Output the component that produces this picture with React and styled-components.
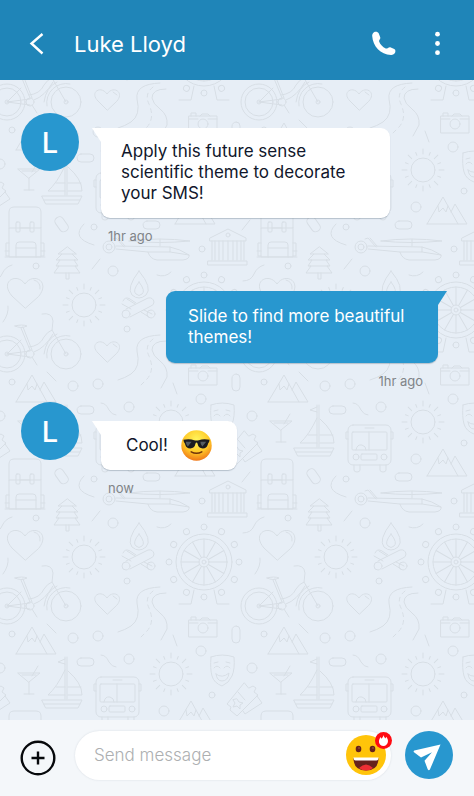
import React from "react";
import styled, { createGlobalStyle } from "styled-components";

const GlobalStyle = createGlobalStyle`
  * { box-sizing: border-box; }
  body { margin: 0; font-family: Inter, "Liberation Sans", sans-serif; }
  button { font: inherit; border: 0; padding: 0; background: none; color: inherit; cursor: pointer; }
`;

const Screen = styled.div`
  display: flex;
  flex-direction: column;
  min-height: 100vh;
  background: #e7eef6;
`;

const Header = styled.header`
  display: flex;
  align-items: center;
  gap: 20px;
  min-height: 80px;
  padding: 8px 24px 0;
  background: #1f85b8;
  color: #fff;
`;

const Actions = styled.div`
  display: flex;
  gap: 24px;
`;

const IconButton = styled.button`
  display: flex;
  align-items: center;
  justify-content: center;
  flex: none;
  width: ${(p) => p.$size || 28}px;
  height: ${(p) => p.$size || 28}px;
`;

const Title = styled.h1`
  flex: 1;
  margin: 0;
  font-size: 22px;
  line-height: 30px;
  font-weight: 400;
`;

const Chat = styled.main`
  position: relative;
  flex: 1;
  overflow: hidden;
`;

const Wallpaper = styled.svg`
  position: absolute;
  inset: 0;
  width: 100%;
  height: 100%;
`;

const Doodles = styled.g`
  fill: none;
  stroke: #d7dee5;
  stroke-width: 1;
  stroke-linecap: round;
  stroke-linejoin: round;
`;

const Messages = styled.ol`
  position: relative;
  display: flex;
  flex-direction: column;
  gap: 11px;
  margin: 0;
  padding: 33px 36px 33px 21px;
  list-style: none;
`;

const Message = styled.li`
  display: flex;
  align-items: flex-start;
  gap: 22px;
  padding-top: ${(p) => (p.$own ? 34 : 0)}px;
  justify-content: ${(p) => (p.$own ? "flex-end" : "flex-start")};
`;

const Avatar = styled.div`
  display: flex;
  align-items: center;
  justify-content: center;
  flex: none;
  width: 58px;
  height: 58px;
  border-radius: 50%;
  background: #2897cf;
  color: #fff;
  font-size: 29px;
  font-weight: 500;
`;

const Stack = styled.div`
  display: flex;
  flex-direction: column;
  gap: 8px;
  padding-top: ${(p) => (p.$own ? 0 : p.$top)}px;
  align-items: ${(p) => (p.$own ? "flex-end" : "flex-start")};
`;

const Bubble = styled.div`
  position: relative;
  display: flex;
  align-items: center;
  gap: 13px;
  max-width: ${(p) => (p.$own ? 272 : 289)}px;
  padding: ${(p) => (p.$compact ? "9px 25px" : p.$own ? "15px 22px" : "13px 20px 14px")};
  border-radius: ${(p) => (p.$own ? "9px 0 9px 9px" : "0 9px 9px 9px")};
  background: ${(p) => (p.$own ? "#2897cf" : "#fff")};
  color: ${(p) => (p.$own ? "#fff" : "#10162b")};
  font-size: 17px;
  line-height: 21px;
  box-shadow: 0 1px 1px rgba(70, 90, 110, 0.3);

  &::before {
    content: "";
    position: absolute;
    top: 0;
    ${(p) => (p.$own ? "right: -9px" : "left: -9px")};
    width: 10px;
    height: 14px;
    background: inherit;
    clip-path: ${(p) => (p.$own ? "polygon(0 0, 100% 0, 10% 100%, 0 100%)" : "polygon(0 0, 100% 0, 100% 100%, 90% 100%)")};
  }
`;

const Time = styled.time`
  padding: ${(p) => (p.$own ? "0 15px" : "0 7px")};
  color: #808488;
  font-size: 13px;
  line-height: 20px;
`;

const Composer = styled.form`
  display: flex;
  align-items: center;
  gap: 14px;
  min-height: 76px;
  padding: 0 21px 6px 19px;
  background: #f4f7fa;
`;

const Field = styled.div`
  display: flex;
  align-items: center;
  flex: 1;
  min-width: 0;
  height: 49px;
  margin-left: 4px;
  padding: 0 5px 0 19px;
  border-radius: 25px;
  background: #fff;
  box-shadow: 0 0 2px rgba(70, 90, 110, 0.18);
`;

const TextInput = styled.input`
  flex: 1;
  min-width: 0;
  border: 0;
  padding: 0;
  outline: 0;
  background: none;
  color: #10162b;
  font: 400 17px/24px Inter, "Liberation Sans", sans-serif;
  &::placeholder { color: #adafb1; font-weight: 300; opacity: 1; }
`;

const EmojiButton = styled(IconButton)`
  position: relative;
`;

const Badge = styled.span`
  position: absolute;
  top: -3px;
  right: -6px;
  width: 17px;
  height: 17px;
  display: flex;
  align-items: center;
  justify-content: center;
  border-radius: 50%;
  background: #ff0b12;
`;

const SendButton = styled.button`
  display: flex;
  align-items: center;
  justify-content: center;
  flex: none;
  width: 48px;
  height: 48px;
  border-radius: 50%;
  background: #2897cf;
`;

const Sun = ({ x, y }) => (
  <g transform={`translate(${x} ${y})`}>
    <circle r="12" />
    {Array.from({ length: 16 }, (_, i) => (
      <path key={i} d={i % 2 ? "M0-16v-3" : "M0-16v-5"} transform={`rotate(${i * 22.5})`} />
    ))}
  </g>
);

const Mountains = ({ x, y }) => (
  <path
    transform={`translate(${x} ${y})`}
    d="M0 27 16 0 31 27M24 15l4-8 12 20H0M11 9l1 6 4-4 3 4 2-6"
  />
);

const Scene = () => (
  <Doodles id="scene">
    {/* backpack */}
    <path d="M9 12V-4q0-5 5-5h22q5 0 5 5v16H9v29h32V12M20 12h10" />
    <rect x="16" y="6" width="4" height="10" rx="1" /><rect x="30" y="6" width="4" height="10" rx="1" />
    <path d="M9 27H6v13h3M41 27h3v13h-3M16 41V29q0-3 3-3h14q3 0 3 3v12M16 32h20M5 35h4M41 35h4M5 41h40" />
    <rect x="-8" y="-4" width="16" height="9" rx="4" transform="translate(62 8) rotate(55)" />
    <path d="M84 8q-14 14 10 21" /><circle cx="94" cy="11" r="3" />
    {/* helicopter */}
    <circle cx="109" cy="31" r="6" /><circle cx="109" cy="31" r="3" />
    <path d="M113 23l3-1 8 9M118 22l7 8M116 30l54 1q10 2 19 8 1 4-6 5h-26q-7-1-9-8l-32-3M148 36h22v-5M129 25q30-4 61 0-31 3-61 0ZM160 23v7M170 36l19 3" />
    <rect x="143" y="5" width="17" height="8" rx="4" />
    {/* museum */}
    <path d="M210 22 228 13l18 9v3h-36zM212 25v19M215 25v19M219 25v19M223 25v19M228 25v19M233 25v19M237 25v19M241 25v19M244 25v19M208 45h39v4h-39z" />
    <circle cx="228" cy="19" r="2" /><circle cx="202" cy="33" r="3" />
    {/* tree */}
    <path d="M67 31 58 38h4l-6 6h4l-4 6h3l-5 7h26l-5-7h3l-4-6h4l-6-6h4zM62 38h10M59 44h16M58 50h18M66 57v6h3v-6" />
    <path d="M100 43 92 53M-9 65q8 0 11-7t10-9M157 59q8 3 14-3M8 90q1 8-5 16M250 4l-8 10" />
    <circle cx="113" cy="55" r="5" /><circle cx="36" cy="50" r="3" />
    {/* hearts */}
    <path d="M25 92 12 80C-1 65 17 56 25 68 33 56 51 65 39 80zM34 64q7 2 6 9" />
    <path d="M107 146 98 137C89 128 101 121 107 130 113 121 125 128 117 137zM113 128l4 3" />
    <Sun x={84} y={89} /><Sun x={171} y={206} />
    {/* campfire */}
    <path d="M139 55q14 17 7 24-7 6-14 0-6-7 7-24ZM139 66q7 9 3 12-3 3-6 0-4-3 3-12Z" />
    <path d="M126 93l22-11q5-1 6 4 0 3-3 4l-21 11M127 83l8 5M123 85q2-5 7-2l6 4M122 88l9 5M141 96l8 5M144 94l8 4" />
    <circle cx="126" cy="98" r="4" /><circle cx="151" cy="98" r="4" /><circle cx="127" cy="113" r="3" />
    {/* ferris wheel */}
    <g transform="translate(204 94)">
      <circle r="28" /><circle r="23" /><circle r="5" /><circle r="2" />
      {Array.from({ length: 12 }, (_, i) => (
        <g key={i} transform={`rotate(${i * 30})`}><path d="M0-5v-18" /><circle cy="-35" r="3" /></g>
      ))}
      <path d="M-10 28l-3 14h-12M10 28l3 14h12" />
    </g>
    {/* bicycle */}
    <circle cx="7" cy="138" r="14" /><circle cx="7" cy="138" r="18" /><circle cx="7" cy="138" r="2" />
    <circle cx="66" cy="138" r="15" /><path d="M47 142a19 19 0 0 1 23-22M44 138q2-15 13-20" />
    <circle cx="66" cy="138" r="2" /><circle cx="30" cy="138" r="4" />
    <path d="M15 110q6 3 12 0-5-2-12 0ZM21 112l9 22M23 111l9 23M7 138l23-3M7 138l23 3M7 138l14-14M34 136q11-4 19-18M29 131q11-1 15-10 3-5 8-7M42 98q10-2 11 7l-1 9 14 24M32 141l5 8" />
    {/* road */}
    <path d="M160 119q-25 1-23 16 4 16-6 23-6 4-13 6M166 125q-14 0-14 9 1 6 8 11 8 6 7 16l-6 11" />
    <path strokeDasharray="4 4" d="M153 123q-9 7-4 17 6 14-2 23l-8 8" />
    {/* camera */}
    <path d="M189 152h28v17h-28zM191 152v-3h5v3M200 152l2-2h6l2 2M189 155h9M208 155h9" /><circle cx="203" cy="160" r="5" />
    <rect x="232" y="158" width="8" height="17" rx="4" />
    <Mountains x={16} y={159} /><Mountains x={175} y={233} />
    <path d="M47 156l9 9M173 167l4 11M101 187q5 0 8 7 3 5 7 5" />
    <circle cx="12" cy="166" r="3" /><circle cx="73" cy="170" r="5" /><circle cx="98" cy="168" r="5" />
    <circle cx="201" cy="183" r="5" /><circle cx="129" cy="191" r="5" /><circle cx="252" cy="200" r="5" />
    <circle cx="212" cy="227" r="3" /><circle cx="164" cy="243" r="5" />
    <rect x="77" y="190" width="17" height="8" rx="4" />
    {/* cocktail and boat */}
    <path d="M18 205h22l-11 9zM29 214v12M24 226h10M38 198l-6 10M22 207h14" />
    <path d="M65 189v42M67 189v42M65 191l-7 3 7 2M65 202q-8 17-17 25h17M68 203q14 12 14 24H68M68 219h13M56 219h9M42 232h40l-4 8H46zM44 236h36" />
    {/* bus */}
    <rect x="96" y="209" width="43" height="40" rx="5" /><rect x="100" y="216" width="35" height="18" rx="1" />
    <path d="M117 216v18M104 234q1-6 6-5 4 1 4 5M113 212h9M96 216h-2v7h2M139 216h2v7h-2M102 249v5q0 2 3 2t3-2v-5M128 249v5q0 2 3 2t3-2v-5" />
    <rect x="109" y="238" width="16" height="6" rx="1" /><circle cx="104" cy="241" r="3" /><circle cx="132" cy="241" r="3" />
    {/* mask and tickets */}
    <path d="M211 189q11-4 23 0 1 12-2 19-3 7-10 10-8-3-10-10-2-7-1-19ZM214 200q3-4 6 0M224 200q3-4 6 0M216 206q6 5 13-1-1 8-7 8-5 0-6-7ZM214 195l4-1M226 194l4 1" />
    <path d="M244 215l-17 21 4 3-1 3 7 6 21-21-4-3 2-4-3-2-4 2zM238 224l7 8M237 231l2 3 4 1-3 2 0 4-3-3-4 1 2-4-2-3zM243 243l2 3 17-11-5-7" />
  </Doodles>
);

const ChatWallpaper = () => (
  <Wallpaper aria-hidden="true">
    <defs>
      <pattern id="doodles" width="252" height="252" y="136" patternUnits="userSpaceOnUse">
        <Scene />
        <use href="#scene" x="252" />
        <use href="#scene" x="-252" />
        <use href="#scene" y="-252" />
        <use href="#scene" y="252" />
      </pattern>
    </defs>
    <rect width="100%" height="100%" fill="url(#doodles)" />
  </Wallpaper>
);

const CoolFace = () => (
  <svg width="31" height="31" viewBox="0 0 32 32" role="img" aria-label="Smiling face with sunglasses">
    <defs>
      <radialGradient id="face" cx="50%" cy="30%" r="70%">
        <stop offset="0" stopColor="#fff55c" /><stop offset=".6" stopColor="#ffc928" /><stop offset="1" stopColor="#f07818" />
      </radialGradient>
    </defs>
    <circle cx="16" cy="16" r="15.700" fill="url(#face)" />
    <path d="M10.500 22.500q5.500 3 11 0" fill="none" stroke="#70340b" strokeWidth="1.500" strokeLinecap="round" />
    <path d="M2.500 10q7-1 11 .5 2.500.8 5 0 4-1.500 11-.5l-.5 2.500q-1 1-1.500 3-1 3.500-5 3.500-4.500 0-5.500-5-.3-1-1-1t-1 1q-1 5-5.500 5-4 0-5-3.500-.5-2-1.500-3Z" fill="#1b1b20" />
    <path d="M5 12l6 0-4 5q-2-2-2-5ZM20 12h6l-4 5q-2-2-2-5Z" fill="#555d63" />
  </svg>
);

const GrinFace = () => (
  <svg width="40" height="40" viewBox="0 0 40 40" aria-hidden="true">
    <circle cx="20" cy="20" r="20" fill="#ffc40a" />
    <ellipse cx="12.500" cy="14" rx="2.800" ry="3.300" fill="#66211c" />
    <ellipse cx="26.500" cy="14" rx="2.800" ry="3.300" fill="#66211c" />
    <circle cx="13" cy="13" r=".8" fill="#a7603e" /><circle cx="27" cy="13" r=".8" fill="#a7603e" />
    <path d="M7.500 23h25q0 12.500-12.500 12.500T7.500 23Z" fill="#66211c" />
    <path d="M13 33q7-7 14 0-3 2.500-7 2.500T13 33Z" fill="#ed2f34" />
    <path d="M7.500 22.500h25q0 3-2 3h-21q-2 0-2-3Z" fill="#fff" />
  </svg>
);

export default function App() {
  return (
    <Screen>
      <GlobalStyle />
      <Header>
        <IconButton type="button" aria-label="Back" $size={30}>
          <svg width="30" height="30" viewBox="0 0 30 30" fill="none" stroke="#fff" strokeWidth="2.400">
            <path d="M18.500 5 7.500 14.500 18.500 24.500" />
          </svg>
        </IconButton>
        <Title>Luke Lloyd</Title>
        <Actions>
          <IconButton type="button" aria-label="Call">
            <svg width="28" height="28" viewBox="0 0 28 28" fill="#fff">
              <path d="M4 2.200C5.500 1.400 8 1.700 8.800 3.400l1.500 4c.5 1.600-1.700 2.600-1.200 4.200 1.200 3 3.500 5.500 6.600 6.900 1.700.6 2.700-1.600 4.600-1.200l3.900 1.600c1.700.8 1.500 3.200.3 4.700-.8 1-2 1.500-3.500 1.400C10.500 24.300 2.900 16.500 2.200 6 2.100 4.500 2.700 3 4 2.200Z" />
            </svg>
          </IconButton>
          <IconButton type="button" aria-label="More options">
            <svg width="28" height="28" viewBox="0 0 28 28" fill="#fff">
              <circle cx="15.500" cy="4.200" r="2.400" /><circle cx="15.500" cy="13.500" r="2.400" /><circle cx="15.500" cy="22.700" r="2.400" />
            </svg>
          </IconButton>
        </Actions>
      </Header>

      <Chat>
        <ChatWallpaper />
        <Messages>
          <Message>
            <Avatar>L</Avatar>
            <Stack $top={15}>
              <Bubble>Apply this future sense scientific theme to decorate your SMS!</Bubble>
              <Time>1hr ago</Time>
            </Stack>
          </Message>
          <Message $own>
            <Stack $own>
              <Bubble $own>Slide to find more beautiful themes!</Bubble>
              <Time $own>1hr ago</Time>
            </Stack>
          </Message>
          <Message>
            <Avatar>L</Avatar>
            <Stack $top={19}>
              <Bubble $compact>Cool! <CoolFace /></Bubble>
              <Time>now</Time>
            </Stack>
          </Message>
        </Messages>
      </Chat>

      <Composer onSubmit={(e) => e.preventDefault()}>
        <IconButton type="button" aria-label="Add attachment" $size={38}>
          <svg width="38" height="44" viewBox="0 0 38 44" fill="none" stroke="#07090c" strokeWidth="2.400">
            <circle cx="19" cy="25" r="16.300" /><path d="M12.500 25h13M19 18.500v13" />
          </svg>
        </IconButton>
        <Field>
          <TextInput type="text" placeholder="Send message" aria-label="Send message" />
          <EmojiButton type="button" aria-label="Emoji" $size={40}>
            <GrinFace />
            <Badge>
              <svg width="11" height="12" viewBox="0 0 11 12" fill="#fff">
                <path d="M5.500 0c.2 1.700 1.200 2.500 2 3.500l.7-1.700c1.400 1.700 2 3.300 1.700 5.300C9.500 9.500 7.800 11 5.500 11S1.300 9.500 1 7.200C.8 5.300 1.500 3.500 2.600 2l.8 1.800C4.300 3 5.100 1.800 5.500 0Z" />
              </svg>
            </Badge>
          </EmojiButton>
        </Field>
        <SendButton type="submit" aria-label="Send">
          <svg width="48" height="48" viewBox="0 0 48 48" fill="#fff">
            <path d="M35.500 13.500 9.300 19.600q-1.200.6-.3 1.700l7 5.300 11-5.300-7.500 8.400 3.200 8.600q1 1.600 2.200.3Z" />
          </svg>
        </SendButton>
      </Composer>
    </Screen>
  );
}
